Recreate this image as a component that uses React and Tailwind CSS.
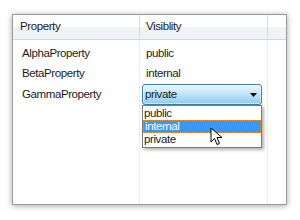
import React from 'react';

const rows = [
  { name: 'AlphaProperty', value: 'public' },
  { name: 'BetaProperty', value: 'internal' },
];

function Cursor() {
  return (
    <svg className="absolute left-[67px] top-[21px]" width="14" height="20" viewBox="0 0 14 20">
      <path
        d="M1 1 L1 15 L4.5 11.5 L7 17.5 L9.5 16.5 L7 10.5 L12 10.5 Z"
        fill="#fff"
        stroke="#000"
        strokeWidth="1"
        strokeLinejoin="miter"
      />
    </svg>
  );
}

export default function App() {
  return (
    <div
      className="w-[300px] h-[220px] bg-white pt-[14px] pl-[12px] text-[11.5px] tracking-[-0.4px] text-[#1b1b1b]"
      style={{ fontFamily: '"Liberation Sans", Arial, sans-serif' }}
    >
      <div className="relative w-[275px] h-[191px] border border-[#9a9a9a] bg-white shadow-[0_1px_6px_rgba(0,0,0,0.35)] flex flex-col">
        {/* header */}
        <div className="flex h-[25px] border-b border-[#d5d5d5] bg-gradient-to-b from-white from-50% to-[#f1f2f4] to-50%">
          <div className="w-[127px] border-r border-[#dcdcdc] pl-[7px] flex items-center">Property</div>
          <div className="w-[128px] border-r border-[#dcdcdc] pl-[6px] flex items-center">Visiblity</div>
          <div className="flex-1"></div>
        </div>

        {/* body */}
        <div className="flex flex-1">
          <div className="w-[127px] border-r border-[#ececec] pt-[4px] pl-[9px]">
            {rows.map((r) => (
              <div key={r.name} className="h-[20px] flex items-center">{r.name}</div>
            ))}
            <div className="h-[21px] flex items-center">GammaProperty</div>
          </div>
          <div className="w-[128px] border-r border-[#ececec] pt-[4px]">
            {rows.map((r) => (
              <div key={r.value} className="h-[20px] flex items-center pl-[6px]">{r.value}</div>
            ))}
            <div className="relative ml-[2px] w-[120px]">
              <div className="h-[21px] rounded-[3px] border border-[#3c7fb1] bg-gradient-to-b from-[#eaf6fd] via-[#bfe3f6] to-[#8ecbee] flex items-center pl-[2px] pr-[4px] shadow-[inset_0_0_0_1px_rgba(255,255,255,0.5)]">
                <span className="flex-1">private</span>
                <svg width="7" height="4" viewBox="0 0 7 4">
                  <path d="M0 0 H7 L3.5 4 Z" fill="#000" />
                </svg>
              </div>
              <div className="absolute left-0 top-[21px] w-[120px] border border-[#7a7a7a] bg-white shadow-[2px_2px_3px_rgba(0,0,0,0.3)] py-[1px] z-10">
                <div className="h-[13px] leading-[13px] pl-[1px]">public</div>
                <div className="h-[13px] leading-[11px] pl-[1px] bg-[#3399ff] text-white border border-dotted border-[#e69138]">internal</div>
                <div className="h-[13px] leading-[13px] pl-[1px]">private</div>
                <Cursor />
              </div>
            </div>
          </div>
          <div className="flex-1"></div>
        </div>
      </div>
    </div>
  );
}
